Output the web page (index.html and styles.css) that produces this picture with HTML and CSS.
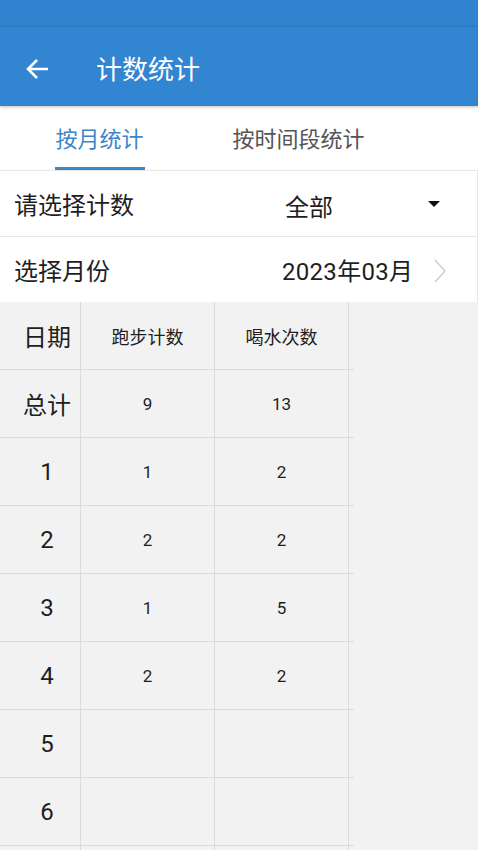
FILE: index.html
```html
<!DOCTYPE html>
<html lang="zh">
<head>
<meta charset="utf-8">
<link rel="stylesheet" href="styles.css">
</head>
<body>
<div class="statusbar"></div>
<div class="toolbar">
  <svg class="back" width="24" height="22" viewBox="0 0 24 22"><path d="M23 11H3M12 2L3 11l9 9" fill="none" stroke="#fff" stroke-width="2.6"/></svg>
  <span class="title">计数统计</span>
</div>
<div class="tabs">
  <div class="tab active">按月统计<span class="ind"></span></div>
  <div class="tab">按时间段统计</div>
</div>
<div class="form">
  <div class="frow">
    <span class="label">请选择计数</span>
    <span class="select">全部</span>
    <svg class="caret" width="14" height="8" viewBox="0 0 14 8"><path d="M1 1h12L7 7z" fill="#111"/></svg>
  </div>
  <div class="frow second">
    <span class="label">选择月份</span>
    <span class="date">2023年03月</span>
    <svg class="chev" width="14" height="26" viewBox="0 0 14 26"><path d="M2 2l10 11L2 24" fill="none" stroke="#cfcfcf" stroke-width="1.6"/></svg>
  </div>
</div>
<div class="table">
  <div class="row"><div class="c1">日期</div><div class="c hd">跑步计数</div><div class="c hd">喝水次数</div></div>
  <div class="row"><div class="c1">总计</div><div class="c">9</div><div class="c">13</div></div>
  <div class="row"><div class="c1">1</div><div class="c">1</div><div class="c">2</div></div>
  <div class="row"><div class="c1">2</div><div class="c">2</div><div class="c">2</div></div>
  <div class="row"><div class="c1">3</div><div class="c">1</div><div class="c">5</div></div>
  <div class="row"><div class="c1">4</div><div class="c">2</div><div class="c">2</div></div>
  <div class="row"><div class="c1">5</div><div class="c"></div><div class="c"></div></div>
  <div class="row"><div class="c1">6</div><div class="c"></div><div class="c"></div></div>
  <div class="row short"><div class="c1"></div><div class="c"></div><div class="c"></div></div>
</div>
</body>
</html>
```
FILE: styles.css
```css
html, body {
  margin: 0;
  padding: 0;
  background: #f2f2f2;
  font-family: "Roboto", "Noto Sans CJK SC", sans-serif;
  color: #1e1e1e;
  width: 478px;
  height: 850px;
  overflow: hidden;
}
.statusbar {
  height: 26px;
  background: #2f83cf;
  border-bottom: 1px solid #2d7ec7;
}
.toolbar {
  height: 79px;
  background: #3185d1;
  display: flex;
  align-items: center;
  box-shadow: 0 1px 3px rgba(0,0,0,0.25);
  position: relative;
  z-index: 2;
}
.back {
  margin-left: 25px;
  margin-top: 4px;
}
.title {
  margin-left: 47px;
  color: #fff;
  font-size: 26px;
  margin-top: 2px;
}
.tabs {
  height: 64px;
  background: #fff;
  display: flex;
  border-bottom: 1px solid #e6e6e6;
}
.tab {
  width: 199px;
  display: flex;
  align-items: center;
  justify-content: center;
  font-size: 22px;
  color: #555;
  position: relative;
  padding-bottom: 2px;
  box-sizing: border-box;
}
.tab.active {
  color: #3d86c8;
}
.ind {
  position: absolute;
  left: 55px;
  width: 90px;
  bottom: 0;
  height: 3px;
  background: #3d86c8;
}
.form {
  background: #fff;
  border-right: 1px solid #e8e8e8;
}
.frow {
  height: 65px;
  display: flex;
  align-items: center;
  border-bottom: 1px solid #e8e8e8;
  font-size: 24px;
}
.frow.second {
  height: 65px;
  border-bottom: none;
}
.label {
  margin-left: 14px;
  width: 271px;
}
.select {
  width: 142px;
  margin-top: 4px;
}
.date {
  margin-left: -3px;
  width: 151px;
  letter-spacing: 0.3px;
}
.chev {
  margin-top: 2px;
}
.table {
  width: 354px;
}
.row {
  display: flex;
  height: 67px;
  border-bottom: 1px solid #dadada;
}
.row.short {
  height: 20px;
}
.c1 {
  width: 66px;
  padding-left: 14px;
  border-right: 1px solid #dadada;
  display: flex;
  align-items: center;
  justify-content: center;
  font-size: 24px;
}
.c {
  width: 133px;
  border-right: 1px solid #dadada;
  display: flex;
  align-items: center;
  justify-content: center;
  font-size: 17px;
}
.c.hd {
  font-size: 18px;
}
```
